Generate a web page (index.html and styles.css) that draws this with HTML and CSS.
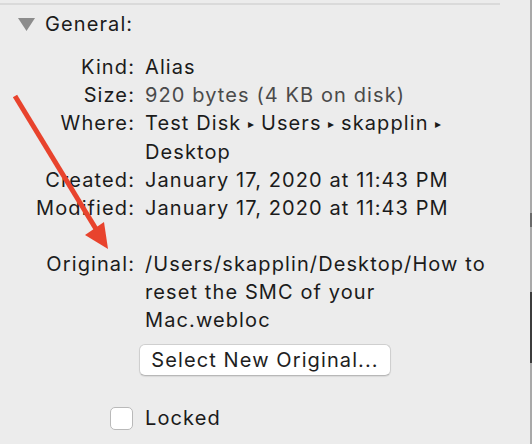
FILE: index.html
```html
<!DOCTYPE html>
<html>
<head>
<meta charset="utf-8">
<link rel="stylesheet" href="styles.css">
</head>
<body>
<div class="window">
  <div class="panel">
    <div class="topline"></div>
    <div class="section-head">
      <svg class="disclosure" width="17" height="13" viewBox="0 0 17 13"><polygon points="0,0 17,0 8.5,13" fill="#8c8c8c"/></svg>
      <span>General:</span>
    </div>
    <div class="info">
      <div class="label">Kind:</div><div class="value">Alias</div>
      <div class="label">Size:</div><div class="value dim">920 bytes (4 KB on disk)</div>
      <div class="label">Where:</div><div class="value">Test Disk <span class="sep">▸</span> Users <span class="sep">▸</span> skapplin <span class="sep">▸</span> Desktop</div>
      <div class="label">Created:</div><div class="value">January 17, 2020 at 11:43 PM</div>
      <div class="label">Modified:</div><div class="value">January 17, 2020 at 11:43 PM</div>
      <div class="label spacer"></div><div class="value spacer"></div>
      <div class="label">Original:</div><div class="value">/Users/skapplin/Desktop/How to reset the SMC of your Mac.webloc</div>
    </div>
    <div class="actions">
      <button class="btn">Select New Original...</button>
    </div>
    <label class="lock"><span class="checkbox"></span><span>Locked</span></label>
  </div>
  <div class="edge"></div>
  <svg class="arrow" width="532" height="444" viewBox="0 0 532 444">
    <line x1="15" y1="96" x2="96" y2="229" stroke="#e8432d" stroke-width="5" stroke-linecap="butt"/>
    <polygon points="85,235 104,222 108,249" fill="#e8432d"/>
  </svg>
</div>
</body>
</html>
```
FILE: styles.css
```css
html, body {
  margin: 0;
  padding: 0;
}
body {
  background: #ececec;
  font-family: Inter, "Liberation Sans", sans-serif;
  font-size: 20px;
  letter-spacing: 1.1px;
  color: #1b1b1b;
  width: 532px;
  height: 444px;
  overflow: hidden;
}
.window {
  position: relative;
  display: flex;
  width: 532px;
  height: 444px;
}
.panel {
  width: 530px;
  display: flex;
  flex-direction: column;
}
.topline {
  width: 500px;
  height: 2px;
  margin-top: 3px;
  background: #dadada;
}
.section-head {
  display: flex;
  align-items: center;
  height: 28px;
  margin-top: 5px;
  padding-left: 18px;
  gap: 10px;
}
.disclosure {
  display: block;
}
.info {
  display: grid;
  grid-template-columns: 135px 345px;
  column-gap: 10px;
  margin-top: 15px;
  line-height: 28px;
}
.label {
  text-align: right;
  white-space: nowrap;
}
.value.dim {
  color: #4a4a4a;
}
.spacer {
  height: 28px;
}
.sep {
  font-size: 12px;
  vertical-align: 2px;
  letter-spacing: 0;
}
.actions {
  padding-left: 139px;
  margin-top: 10px;
}
.btn {
  width: 252px;
  height: 32px;
  background: #ffffff;
  border: 1px solid #cfcfcf;
  border-bottom-color: #b8b8b8;
  border-radius: 6px;
  font-family: inherit;
  font-size: 20px;
  letter-spacing: 1.1px;
  color: #1e1e1e;
  padding: 0;
  box-shadow: 0 1px 1px rgba(0,0,0,0.08);
}
.lock {
  display: flex;
  align-items: center;
  gap: 12px;
  padding-left: 110px;
  margin-top: 30px;
  height: 24px;
}
.checkbox {
  width: 21px;
  height: 21px;
  background: #ffffff;
  border: 1px solid #b9b9b9;
  border-radius: 5px;
}
.edge {
  width: 2px;
  height: 444px;
  background: linear-gradient(to bottom,
    #a9a9a9 0, #a9a9a9 213px,
    #6a6a6a 213px, #6a6a6a 227px,
    #a9a9a9 227px, #a9a9a9 292px,
    #3c3c3c 292px, #3c3c3c 363px,
    #a9a9a9 363px);
}
.arrow {
  position: absolute;
  left: 0;
  top: 0;
  pointer-events: none;
}
```
